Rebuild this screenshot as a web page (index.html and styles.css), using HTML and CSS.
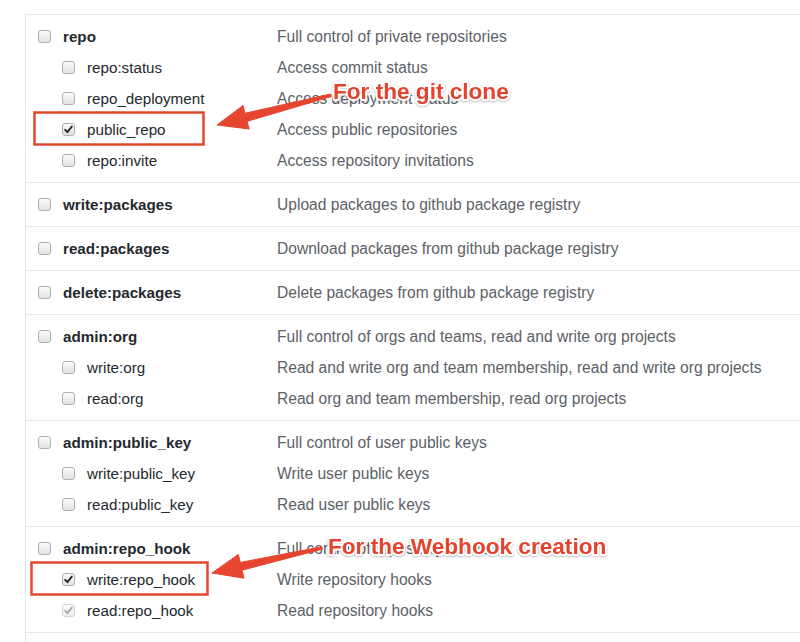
FILE: index.html
```html
<!DOCTYPE html>
<html lang="en">
<head>
<meta charset="utf-8">
<title>Token scopes</title>
<link rel="stylesheet" href="styles.css">
</head>
<body>
<div class="page">
  <div class="scopes">
    <section class="group">
      <div class="row top"><div class="scope"><span class="cb"></span><span class="name">repo</span></div><span class="desc">Full control of private repositories</span></div>
      <div class="row sub"><div class="scope"><span class="cb"></span><span class="name">repo:status</span></div><span class="desc">Access commit status</span></div>
      <div class="row sub"><div class="scope"><span class="cb"></span><span class="name">repo_deployment</span></div><span class="desc">Access deployment status</span></div>
      <div class="row sub"><div class="scope"><span class="cb checked"><svg viewBox="0 0 13 13"><path d="M3.2 6.8 L5.4 9.2 L9.8 3.6" /></svg></span><span class="name">public_repo</span></div><span class="desc">Access public repositories</span></div>
      <div class="row sub"><div class="scope"><span class="cb"></span><span class="name">repo:invite</span></div><span class="desc">Access repository invitations</span></div>
    </section>
    <section class="group">
      <div class="row top"><div class="scope"><span class="cb"></span><span class="name">write:packages</span></div><span class="desc">Upload packages to github package registry</span></div>
    </section>
    <section class="group">
      <div class="row top"><div class="scope"><span class="cb"></span><span class="name">read:packages</span></div><span class="desc">Download packages from github package registry</span></div>
    </section>
    <section class="group">
      <div class="row top"><div class="scope"><span class="cb"></span><span class="name">delete:packages</span></div><span class="desc">Delete packages from github package registry</span></div>
    </section>
    <section class="group">
      <div class="row top"><div class="scope"><span class="cb"></span><span class="name">admin:org</span></div><span class="desc">Full control of orgs and teams, read and write org projects</span></div>
      <div class="row sub"><div class="scope"><span class="cb"></span><span class="name">write:org</span></div><span class="desc">Read and write org and team membership, read and write org projects</span></div>
      <div class="row sub"><div class="scope"><span class="cb"></span><span class="name">read:org</span></div><span class="desc">Read org and team membership, read org projects</span></div>
    </section>
    <section class="group">
      <div class="row top"><div class="scope"><span class="cb"></span><span class="name">admin:public_key</span></div><span class="desc">Full control of user public keys</span></div>
      <div class="row sub"><div class="scope"><span class="cb"></span><span class="name">write:public_key</span></div><span class="desc">Write user public keys</span></div>
      <div class="row sub"><div class="scope"><span class="cb"></span><span class="name">read:public_key</span></div><span class="desc">Read user public keys</span></div>
    </section>
    <section class="group">
      <div class="row top"><div class="scope"><span class="cb"></span><span class="name">admin:repo_hook</span></div><span class="desc">Full control of repository hooks</span></div>
      <div class="row sub"><div class="scope"><span class="cb checked"><svg viewBox="0 0 13 13"><path d="M3.2 6.8 L5.4 9.2 L9.8 3.6" /></svg></span><span class="name">write:repo_hook</span></div><span class="desc">Write repository hooks</span></div>
      <div class="row sub"><div class="scope"><span class="cb checked disabled"><svg viewBox="0 0 13 13"><path d="M3.2 6.8 L5.4 9.2 L9.8 3.6" /></svg></span><span class="name">read:repo_hook</span></div><span class="desc">Read repository hooks</span></div>
    </section>
    <section class="group"></section>
  </div>

  <svg class="annot" width="800" height="642" viewBox="0 0 800 642">
    <rect class="box" x="34.5" y="112.5" width="169" height="32" />
    <polygon class="arrow" points="217,125 243,105.5 245,113.2 330.7,94 331.3,96.5 247,121.4 249.2,129" />
    <text class="note" x="333" y="99">For the git clone</text>

    <rect class="box" x="31.5" y="562.5" width="176" height="32" />
    <polygon class="arrow" points="212,573 238.3,554.4 240.3,562.4 321.8,546.8 322.2,549.2 242.1,570.2 244,578.2" />
    <text class="note" x="328" y="554">For the Webhook creation</text>
  </svg>
</div>
</body>
</html>
```

FILE: styles.css
```css
html, body {
  margin: 0;
  padding: 0;
  background: #ffffff;
}

body {
  width: 800px;
  height: 642px;
  overflow: hidden;
  font-family: "Liberation Sans", Arial, Helvetica, sans-serif;
}

.page {
  position: relative;
  width: 800px;
  height: 642px;
  padding: 14px 0 0 25px;
  box-sizing: border-box;
}

.scopes {
  width: 775px;
  border-top: 1px solid #e6e8eb;
  border-left: 1px solid #e6e8eb;
}

.group {
  padding: 6px 0;
  border-bottom: 1px solid #e6e8eb;
}

.row {
  display: flex;
  align-items: center;
  height: 31px;
}

.scope {
  display: flex;
  align-items: center;
  gap: 12px;
  width: 251px;
  flex: none;
  box-sizing: border-box;
  padding-left: 12px;
}

.sub .scope {
  padding-left: 36px;
}

.name {
  font-size: 15.2px;
  color: #24292e;
}

.top .name {
  font-weight: bold;
}

.desc {
  font-size: 15.6px;
  color: #5c6167;
  white-space: nowrap;
}

.cb {
  width: 13px;
  height: 13px;
  box-sizing: border-box;
  border: 1px solid #b0b0b0;
  border-radius: 3px;
  background: linear-gradient(#fbfbfb, #e2e2e2);
  flex: none;
  display: flex;
  align-items: center;
  justify-content: center;
}

.cb svg {
  width: 13px;
  height: 13px;
  margin: -1px;
}

.cb svg path {
  fill: none;
  stroke: #2a2a2a;
  stroke-width: 1.9;
  stroke-linecap: round;
  stroke-linejoin: round;
}

.cb.disabled {
  border-color: #d4d4d4;
  background: linear-gradient(#fafafa, #efefef);
}

.cb.disabled svg path {
  stroke: #a8a8a8;
}

.annot {
  position: absolute;
  top: 0;
  left: 0;
  pointer-events: none;
}

.box {
  fill: none;
  stroke: #e2472f;
  stroke-width: 2.5;
}

.arrow {
  fill: #e6452f;
  stroke: #e6452f;
  stroke-width: 1;
  stroke-linejoin: round;
}

.note {
  font-family: "Liberation Sans", Arial, sans-serif;
  font-weight: bold;
  font-size: 22.6px;
  fill: #e4432e;
  stroke: #ffffff;
  stroke-width: 4px;
  stroke-linejoin: round;
  paint-order: stroke;
  filter: drop-shadow(0 1px 1px rgba(0, 0, 0, 0.25));
}
```
